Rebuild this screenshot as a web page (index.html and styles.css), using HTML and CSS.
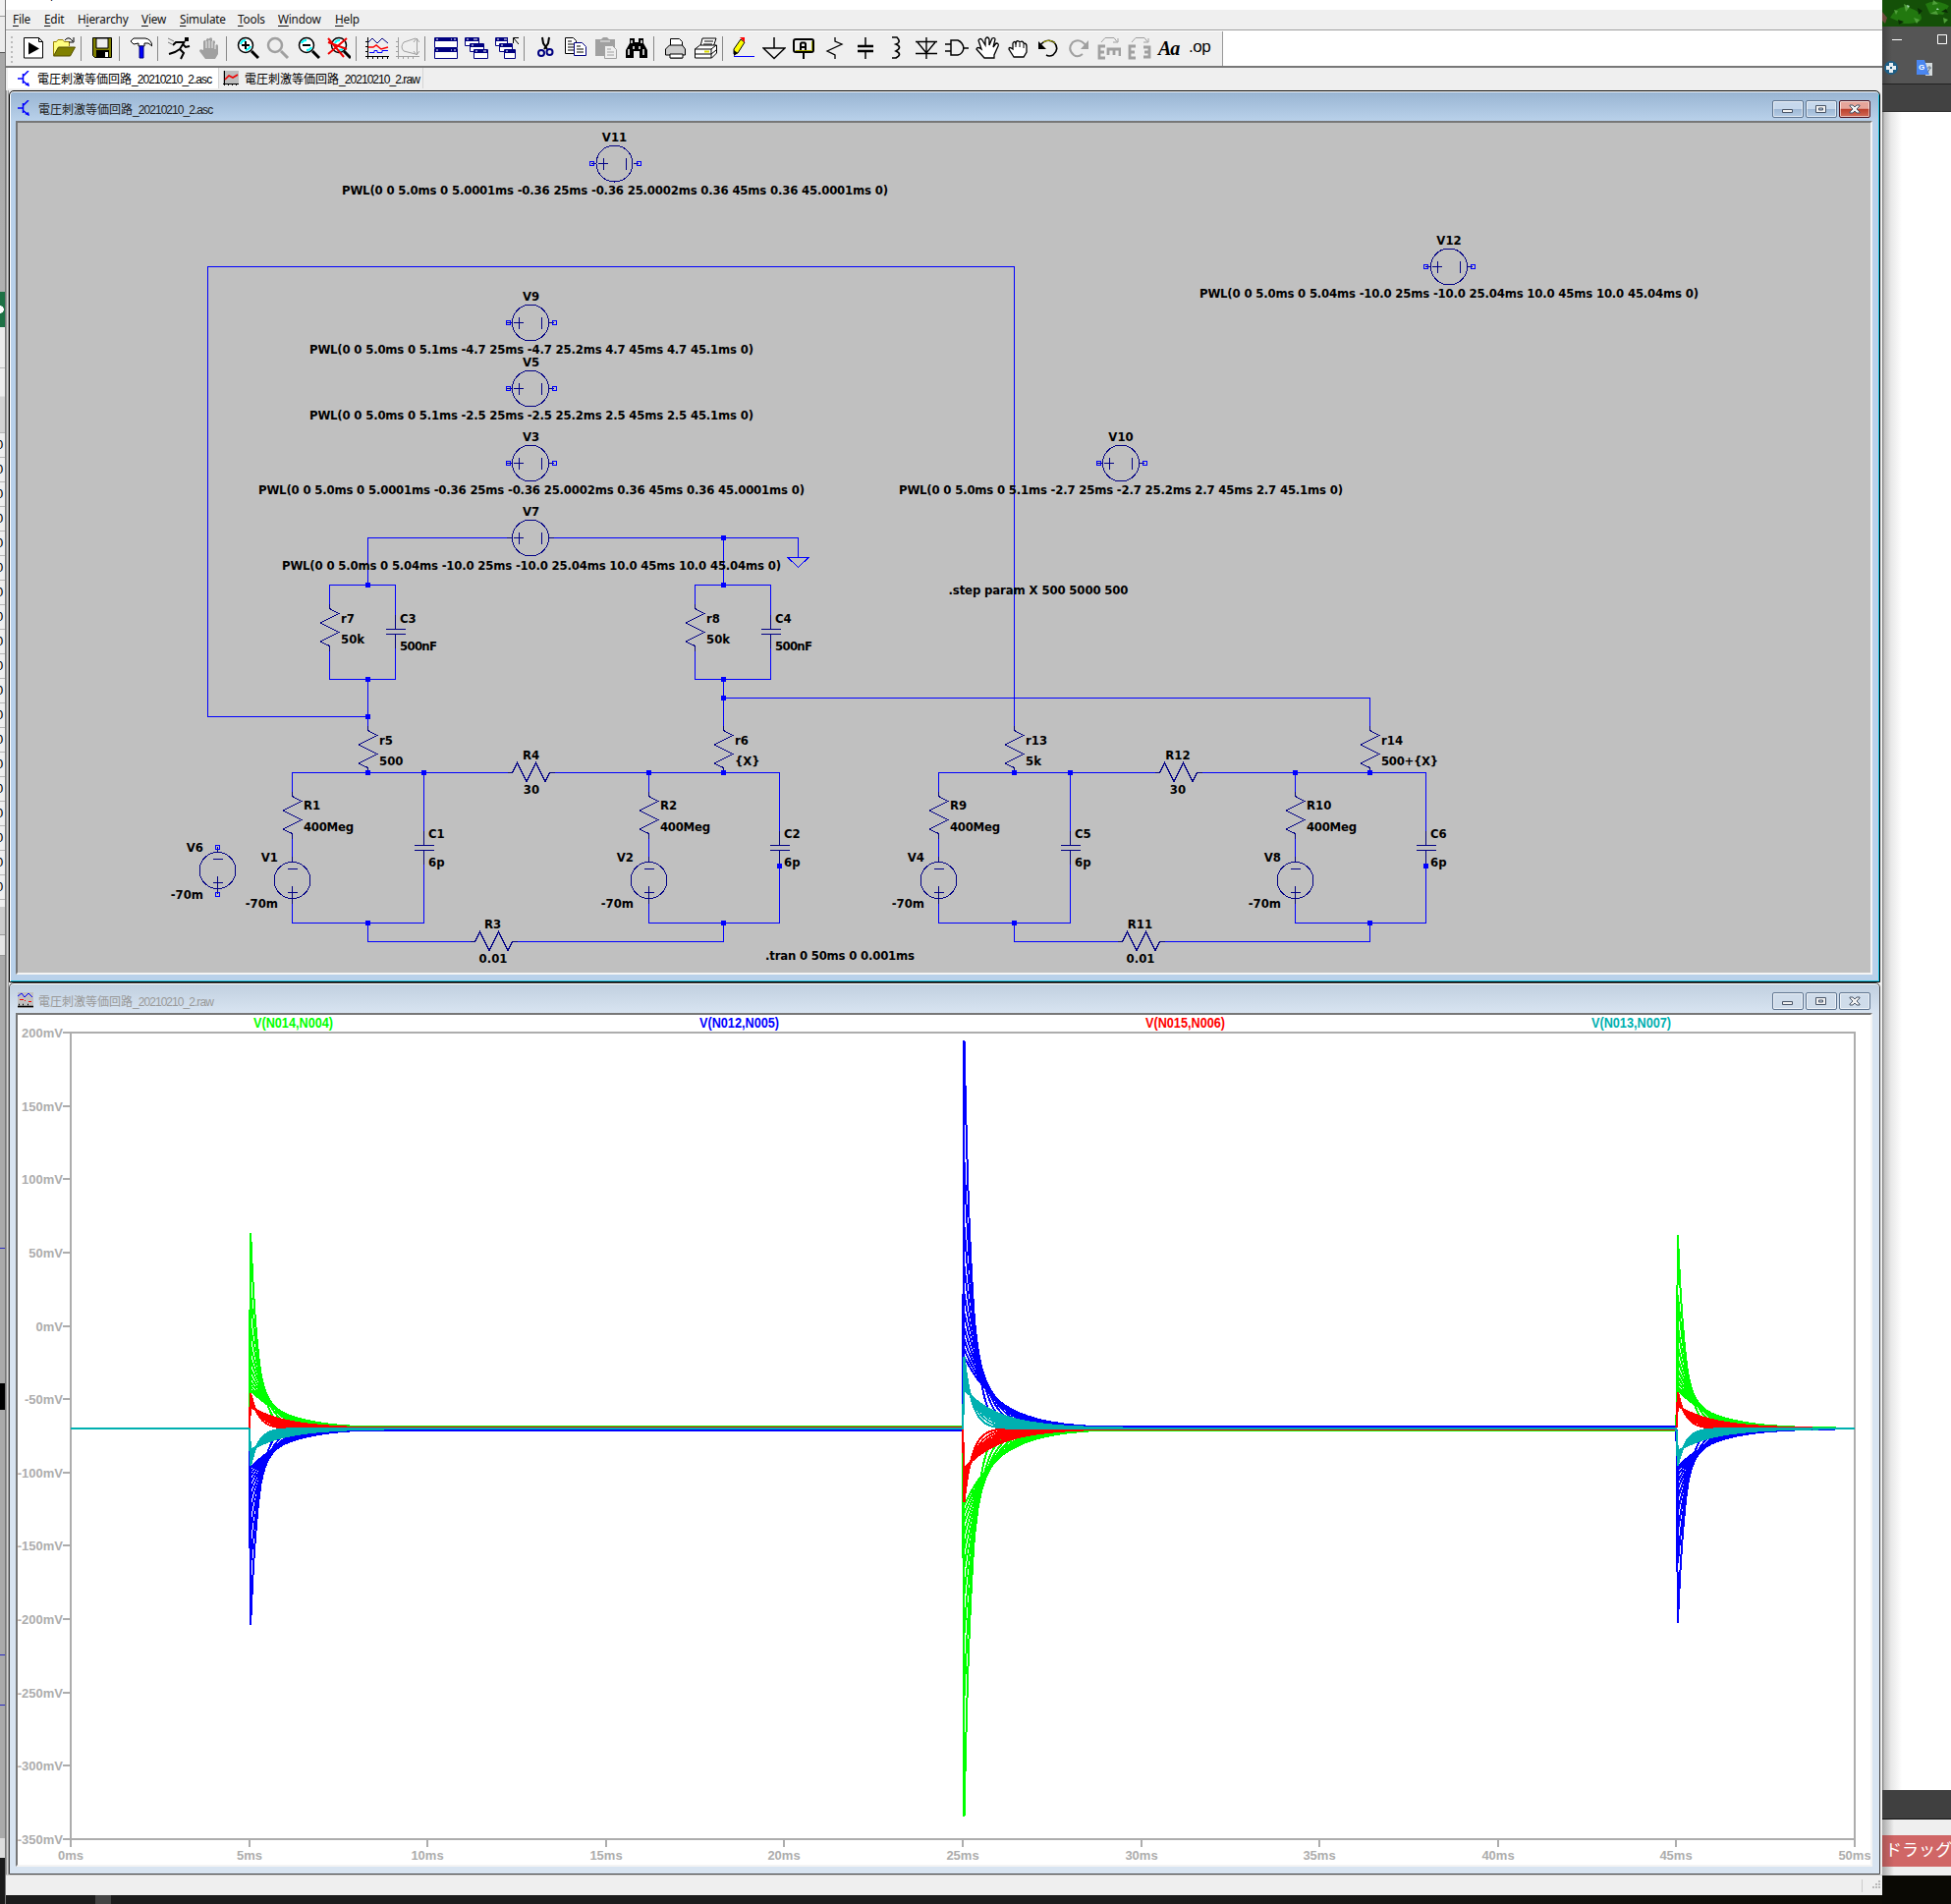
FILE: index.html
```html
<!DOCTYPE html>
<html lang="ja">
<head>
<meta charset="utf-8">
<title>LTspice XVII</title>
<link rel="stylesheet" href="styles.css">
</head>
<body>
<div class="desktop">
  <aside class="left-strip">
    <div class="ls-a"></div><div class="ls-b"></div><div class="ls-c"></div>
    <div class="ls-green"></div><div class="ls-white"></div><div class="ls-head"></div>
    <div class="ls-cells" id="cells"></div>
    <div class="ls-d"></div><div class="ls-e"></div><div class="ls-f"></div><div class="ls-black"></div><div class="ls-g"></div><div class="ls-h"></div><div class="ls-dark"></div>
  </aside>

  <main class="app">
    <div class="app-title"><span>LTspice XVII - 電圧刺激等価回路_20210210_2.asc</span></div>
    <nav class="menu">
      <span class="m1"><u>F</u>ile</span><span class="m2"><u>E</u>dit</span><span class="m3">H<u>i</u>erarchy</span><span class="m4"><u>V</u>iew</span><span class="m5"><u>S</u>imulate</span><span class="m6"><u>T</u>ools</span><span class="m7"><u>W</u>indow</span><span class="m8"><u>H</u>elp</span>
    </nav>
    <div class="toolbar-row">
      <div class="toolbar">
        <i class="grip"></i>
        <svg class="ic" viewBox="0 0 24 24"><path d="M2.500 1.500h15l4 4v16.500h-19z" fill="#fff" stroke="#000"/><path d="M17.500 1.500v4h4" fill="none" stroke="#000"/><path d="M7 6l11 6.500-11 6z"/></svg>
        <svg class="ic" viewBox="0 0 24 24"><path d="M1.500 19V5.500h3l1.500-2h5l1.500 2h5V10" fill="#ffff80" stroke="#998000"/><path d="M1.500 20l5-9h17l-5 9z" fill="#808000" stroke="#554f00"/><path d="M13 4q4-5 8 1M22 1v5h-5" fill="none" stroke="#000"/></svg>
        <i class="sep"></i>
        <svg class="ic" viewBox="0 0 24 24"><path d="M2.500 1.500h19v20h-17l-2-2z" fill="#808000" stroke="#000"/><path d="M6 2h12v10H6z" fill="#efefef" stroke="#000"/><path d="M6 14h13v8H6z"/><path d="M15 16h3v5h-3z" fill="#fff"/></svg>
        <i class="sep"></i>
        <svg class="ic" viewBox="0 0 24 24"><path d="M2 5l3-3h12q6 1 7 8l-4-3h-4v3h-6V7L5 8z" fill="#fff" stroke="#000"/><path d="M11 10h4v12h-4z" fill="#00f" stroke="#000080"/></svg>
        <i class="sep"></i>
        <svg class="ic" viewBox="0 0 24 24"><path d="M18 1h4v4h-4z"/><path d="M18 5l-5 8 4 4-3 6M13 13l-5 3-6 2M17 6L9 6 6 9M16 8l3 3 4-1" fill="none" stroke="#000" stroke-width="2"/><path d="M1 2l6 3M1 6l4 2" stroke="#777"/></svg>
        <svg class="ic" viewBox="0 0 24 24"><path d="M8 23l-6-8q0-3 4-1V5q2-2 3 0V3q2-2 3 0V2q3-2 3 1v2q3-2 3 1v3q3-2 3 1v8l-3 5z" fill="#a0a0a0"/><path d="M9 5v7M12 4v8M15 5v7M18 7v6" stroke="#efefef"/></svg>
        <i class="sep"></i>
        <svg class="ic" viewBox="0 0 24 24"><circle cx="10" cy="9" r="7.500" fill="#fff" stroke="#000" stroke-width="1.500"/><path d="M5 8q1-4 5-4M15 10q-1 3-5 4" stroke="#0ff" fill="none" stroke-width="2"/><path d="M6 9h8M10 5v8" stroke="#000" stroke-width="2"/><path d="M16 15l7 7" stroke="#000" stroke-width="3"/></svg>
        <svg class="ic" viewBox="0 0 24 24"><circle cx="9" cy="9" r="7" fill="none" stroke="#a0a0a0" stroke-width="2.500"/><path d="M15 15l7 7" stroke="#a0a0a0" stroke-width="3"/></svg>
        <svg class="ic" viewBox="0 0 24 24"><circle cx="10" cy="9" r="7.500" fill="#fff" stroke="#000" stroke-width="1.500"/><path d="M5 7q1-3 5-3M15 11q-1 3-5 3" stroke="#0ff" fill="none" stroke-width="2"/><path d="M6 9h8" stroke="#000" stroke-width="2"/><path d="M16 15l7 7" stroke="#000" stroke-width="3"/></svg>
        <svg class="ic" viewBox="0 0 24 24"><circle cx="12" cy="9" r="7.500" fill="#fff" stroke="#000" stroke-width="1.500"/><path d="M8 7q1-3 5-3M17 11q-1 3-5 3" stroke="#0ff" fill="none" stroke-width="2"/><path d="M17 15l7 7" stroke="#000" stroke-width="3"/><path d="M1 2l16 19M20 2L1 18M1 6l19 7" stroke="#e00" stroke-width="2"/></svg>
        <i class="sep"></i>
        <svg class="ic" viewBox="0 0 24 24"><path d="M2.500 1v22M0 20.500h24M0 5.500h3M0 10.500h3M0 15.500h3M7.500 20v3M12.500 20v3M17.500 20v3M22.500 20v3" stroke="#000"/><path d="M3 6l4-4 5 5 5-5 6 5" stroke="#000080" fill="none"/><path d="M3 11h5l3-2 5 4 7-2" stroke="#f00" fill="none" stroke-width="1.500"/><path d="M4 16.500h5v-2h3v2h5v-2h6" stroke="#00f" fill="none"/></svg>
        <svg class="ic" viewBox="0 0 24 24"><path d="M2.500 1v22M0 20.500h24M0 5.500h3M0 10.500h3M0 15.500h3M7.500 20v3M12.500 20v3M17.500 20v3M21.500 2v17M18 6l3-4 3 4M18 15l3 4 3-4M20 2L8 6q-4 5 0 9l12 3" stroke="#a0a0a0" fill="none"/></svg>
        <i class="sep"></i>
        <svg class="ic" viewBox="0 0 24 24"><path d="M.5 1.500h23v10H.5zM.5 12.500h23v10H.5z" fill="#fff" stroke="#000080"/><path d="M1 1h22v4H1zM1 12h22v4H1z" fill="#000080"/><path d="M17 3h1M20 3h2M2 3h2M17 14h1M20 14h2M2 14h2" stroke="#fff"/></svg>
        <svg class="ic" viewBox="0 0 24 24"><g fill="#fff" stroke="#000080"><path d="M.5 1.500h14v8H.5z"/><path d="M5.500 7.500h14v8h-14z"/><path d="M9.500 13.500h14v9h-14z"/></g><path d="M1 1h13v4H1zM6 7h13v4H6zM10 13h13v4H10z" fill="#000080"/><path d="M2 3h2M9 3h4M7 9h2M11 15h2M19 15h3" stroke="#fff"/></svg>
        <svg class="ic" viewBox="0 0 24 24"><g fill="#fff" stroke="#000080"><path d="M.5 1.500h12v8H.5z"/><path d="M4.500 7.500h13v8h-13z"/><path d="M9.500 13.500h11v9h-11z"/></g><path d="M1 1h12v4H1zM5 7h12v4H5zM10 13h10v4H10z" fill="#000080"/><path d="M2 3h2M9 3h3M6 9h2M11 15h2" stroke="#fff"/><path d="M18.500 7V1.500H24M19 2l5 6" stroke="#000" fill="none"/></svg>
        <i class="sep"></i>
        <svg class="ic" viewBox="0 0 24 24"><path d="M9 1l1 6 4 6M16 1l-1 6-4 6" stroke="#000" stroke-width="2" fill="none"/><circle cx="8" cy="17" r="3" fill="none" stroke="#000080" stroke-width="2"/><circle cx="16.500" cy="16" r="3" fill="none" stroke="#000080" stroke-width="2"/></svg>
        <svg class="ic" viewBox="0 0 24 24"><path d="M1.500 1.500h8l3 3v13h-11z" fill="#fff" stroke="#000"/><path d="M4 5h4M4 8h6M4 11h6M4 14h6" stroke="#000"/><path d="M10.500 6.500h8l4 4v9h-12z" fill="#fff" stroke="#000080"/><path d="M13 10h4M13 13h7M13 16h7" stroke="#000"/></svg>
        <svg class="ic" viewBox="0 0 24 24"><path d="M1 3h6l2-2h4l2 2h6v17H1z" fill="#a0a0a0"/><path d="M6 5h10" stroke="#efefef"/><path d="M10.500 9.500h8l4 4v9h-12z" fill="#efefef" stroke="#a0a0a0"/><path d="M13 13h4M13 16h7M13 19h7" stroke="#a0a0a0"/></svg>
        <svg class="ic" viewBox="0 0 24 24"><path d="M5 2h5v4h4V2h5v5l4 7v8h-8v-7H9v7H1v-8l4-7z"/><path d="M7 4v3M17 4v3M4 13v6M9 10v3M15 10v3M19 13v6" stroke="#fff" stroke-width="1.500"/></svg>
        <i class="sep"></i>
        <svg class="ic" viewBox="0 0 24 24"><path d="M7.500 10V2.500h9l3 3V10" fill="#fff" stroke="#000"/><path d="M2.500 13l4-4h13l3 4v6h-3v3h-12v-3h-5z" fill="#ccc" stroke="#000"/><path d="M7 18h13v4H7z" fill="#fff" stroke="#000"/></svg>
        <svg class="ic" viewBox="0 0 24 24"><path d="M7 10l2-8h14l-3 9" fill="#fff" stroke="#000"/><path d="M11 5h9M10 8h9" stroke="#000"/><path d="M1.500 13l5-4h17v8l-5 5h-17z" fill="#fff" stroke="#000"/><path d="M1 13h17v9M18 13l5-4M2 18h16l5-4" fill="none" stroke="#000"/><path d="M11 15.500h5" stroke="#dd0" stroke-width="2"/></svg>
        <i class="sep"></i>
        <svg class="ic" viewBox="0 0 24 24"><path d="M2 13L9 3l4 3-7 11-4 1z" fill="#ff0" stroke="#000"/><path d="M8 1h5v5z" fill="#f00"/><path d="M2 14l4 3-4 3z"/><path d="M2 20.500h21" stroke="#00f"/></svg>
        <svg class="ic" viewBox="0 0 24 24"><path d="M12 1v11M1 12h22L12 22.500z" fill="none" stroke="#000" stroke-width="1.500"/></svg>
        <svg class="ic" viewBox="0 0 24 24"><rect x="1" y="3" width="20" height="13" rx="2" fill="#efefef" stroke="#000" stroke-width="2"/><path d="M3 14.500h16.500V5" stroke="#aa0" fill="none"/><path d="M8 14V7.500l1-1h3l1 1V14M8 11h5M11 16v7" fill="none" stroke="#000" stroke-width="2"/></svg>
        <svg class="ic" viewBox="0 0 24 24"><path d="M12 1v4l7 3-15 7 8 4v4" fill="none" stroke="#000" stroke-width="1.300"/></svg>
        <svg class="ic" viewBox="0 0 24 24"><path d="M12 1v9M12 16v7" stroke="#000" stroke-width="1.500"/><path d="M4 10h16M4 15h16" stroke="#000" stroke-width="2.500"/></svg>
        <svg class="ic" viewBox="0 0 24 24"><path d="M8 1h5q5 5-1 7 7 3 0 7 7 3 0 7H8" fill="none" stroke="#000" stroke-width="1.700"/></svg>
        <svg class="ic" viewBox="0 0 24 24"><path d="M12 1v22M1 5.500h22M3 6l9 11 9-11M1 17.500h22" fill="none" stroke="#000" stroke-width="1.400"/></svg>
        <svg class="ic" viewBox="0 0 24 24"><path d="M6 4h7q5 2 6 8-1 6-6 7H6zM0 8h6M0 15h6M18 12h6" fill="none" stroke="#000" stroke-width="1.500"/></svg>
        <svg class="ic" viewBox="0 0 24 24"><path d="M9 22l-8-9q1-3 5 0L3 4q2-3 4 0l3 5V3q2-4 4 0v6l3-7q3-1 3 1l-2 8 3-4q3 0 2 3l-4 9v3z" fill="#fff" stroke="#000" stroke-width="1.300"/></svg>
        <svg class="ic" viewBox="0 0 24 24"><path d="M8 21l-5-8q0-3 4 0V7q2-3 3 0 1-4 4-1 3-2 4 1 3 0 3 3v6l-3 5z" fill="#fff" stroke="#000" stroke-width="1.300"/><path d="M10 7v4M14 7v4M18 8v4" stroke="#000"/></svg>
        <svg class="ic" viewBox="0 0 24 24"><path d="M3 10q7-9 15-4 6 7-1 13-4 2-7 0" fill="none" stroke="#000" stroke-width="1.600"/><path d="M7 6q7-4 12 1" fill="none" stroke="#aa0"/><path d="M2 5v8h8z"/></svg>
        <svg class="ic" viewBox="0 0 24 24"><path d="M20 10Q13 1 6 6q-6 7 1 13 4 3 9-1" fill="none" stroke="#a0a0a0" stroke-width="2"/><path d="M22 4v9h-8z" fill="#a0a0a0"/></svg>
        <svg class="ic" viewBox="0 0 24 24"><path d="M8 10H2v12h6M2 16h5M11 19v-6h12v7M17 13v6" fill="none" stroke="#a0a0a0" stroke-width="2.800"/><path d="M4 6l4-4.500h9l3 4M21 2v4h-5" fill="none" stroke="#a0a0a0"/></svg>
        <svg class="ic" viewBox="0 0 24 24"><path d="M8 10H2v12h6M2 16h5M16 11h6v10h-6M17 16h5" fill="none" stroke="#a0a0a0" stroke-width="2.800"/><path d="M4 6l4-4.500h9l3 4M21 2v4h-5" fill="none" stroke="#a0a0a0"/></svg>
        <span class="ic txt-aa">Aa</span>
        <span class="ic txt-op">.op</span>
      </div>
    </div>
    <div class="tabs">
      <div class="tab active"><svg class="tico" viewBox="0 0 16 16"><use href="#bjt"/></svg><span>電圧刺激等価回路<b>_20210210_2.asc</b></span></div>
      <div class="tab"><svg class="tico" viewBox="0 0 16 16"><path d="M0 0h16v13H0z" fill="#bdbdbd"/><path d="M1.500 0v15M0 13.500h16M5.500 13v2M9.500 13v2M13.500 13v2" stroke="#000"/><path d="M2 9l4-4 4 2 5-3" stroke="#e00" stroke-width="1.600" fill="none"/></svg><span>電圧刺激等価回路<b>_20210210_2.raw</b></span></div>
    </div>

    <section class="win focus">
      <header class="caption"><svg class="cico" viewBox="0 0 16 16"><use href="#bjt"/></svg><span>電圧刺激等価回路<b>_20210210_2.asc</b></span>
        <div class="btns"><i class="wb"><svg viewBox="0 0 30 16"><path d="M9.500 8.500h10v3h-10z" class="g"/></svg></i><i class="wb"><svg viewBox="0 0 30 16"><path d="M9.500 4.500h10v7h-10zM12.500 7h4v2h-4z" class="g"/></svg></i><i class="wb x"><svg viewBox="0 0 30 16"><path d="M10 4h3l2 2 2-2h3v1l-3 3 3 3v1h-3l-2-2-2 2h-3v-1l3-3-3-3z" class="g"/></svg></i></div>
      </header>
      <div class="client">
      <svg class="schem" viewBox="18 125 1886 865">
        <defs>
          <g id="bjt" fill="none" stroke="#00f" stroke-width="1.500"><path d="M0 8h5M5.500 3v10M5 6l6-6M5 10l6 5" shape-rendering="auto"/><path d="M7 14l5 2-1-4" fill="#00f" stroke="none"/></g>
          <path id="res" class="dk" d="M0-5V0l9.500 5-19 9.500 19 9.500-19 9.500 9.500 4.500v5"/>
          <path id="resh" class="dk" d="M-24 0h5l5-10 9.500 19 9.500-19 9.500 19 4.500-9h5"/>
          <path id="cap" class="dk" d="M0-17V-2M-10-2.500H10M-10 2.500H10M0 2V17"/>
          <g id="src" class="dk"><circle r="18.500"/><path d="M-5-12H5M-5 12H5M0 6V18M0-24v5M0 19v5"/></g>
          <g id="srch" class="dk"><circle r="18.500"/><path d="M-17 0h10M-11.500-6v12M11.500-6v12M-24 0h5M19 0h5"/></g>
          <path id="pin" class="w" d="M-2-2h4v4h-4z"/>
          <path id="dot" d="M-2.500-2.500h5v5h-5z" fill="#00f"/>
        </defs>
        <g class="w">
          <path d="M374.500 729.500H211.500V271.500H1032.500V744"/>
          <path d="M374.500 595.500V547.500H521M560 547.500H812.500V567M736.500 547.500V595.500M802 567.500H823L812.500 577.500Z"/>
          <path d="M335.500 619V595.500H402.500V640M335.500 657V691.500H402.500V645M374.500 691.500V744"/>
          <path d="M707.500 619V595.500H784.500V640M707.500 657V691.500H784.500V645M736.500 691.500V744M736.500 710.500H1394.500V744"/>
          <path d="M297.500 810V786.500H521M560 786.500H793.500V860M431.500 786.500V860M660.500 786.500V810M297.500 848V877M660.500 848V877M297.500 915V939.500H431.500V865M660.500 915V939.500H793.500V865M374.500 939.500V958.500H483M521 958.500H736.500V939.500"/>
          <path d="M955.500 810V786.500H1180M1219 786.500H1451.500V860M1089.500 786.500V860M1318.500 786.500V810M955.500 848V877M1318.500 848V877M955.500 915V939.500H1089.500V865M1318.500 915V939.500H1451.500V865M1032.500 939.500V958.500H1142M1180 958.500H1394.500V939.500"/>
        </g>
        <use href="#res" x="335.500" y="619.500"/><use href="#res" x="707.500" y="619.500"/>
        <use href="#res" x="374.500" y="743.500"/><use href="#res" x="736.500" y="743.500"/><use href="#res" x="1032.500" y="743.500"/><use href="#res" x="1394.500" y="743.500"/>
        <use href="#res" x="297.500" y="810.500"/><use href="#res" x="660.500" y="810.500"/><use href="#res" x="955.500" y="810.500"/><use href="#res" x="1318.500" y="810.500"/>
        <use href="#resh" x="540.500" y="786.500"/><use href="#resh" x="1199.500" y="786.500"/><use href="#resh" x="502.500" y="958.500"/><use href="#resh" x="1161.500" y="958.500"/>
        <use href="#cap" x="402.500" y="643"/><use href="#cap" x="784.500" y="643"/>
        <use href="#cap" x="431.500" y="863"/><use href="#cap" x="793.500" y="863"/><use href="#cap" x="1089.500" y="863"/><use href="#cap" x="1451.500" y="863"/>
        <use href="#src" x="297.500" y="896"/><use href="#src" x="660.500" y="896"/><use href="#src" x="955.500" y="896"/><use href="#src" x="1318.500" y="896"/><use href="#src" x="221.500" y="886"/>
        <use href="#srch" x="540" y="547.500"/><use href="#srch" x="625.500" y="166.500"/><use href="#srch" x="540" y="328.500"/><use href="#srch" x="540" y="395.500"/><use href="#srch" x="540" y="471.500"/><use href="#srch" x="1141" y="471.500"/><use href="#srch" x="1475" y="271.500"/>
        <use href="#pin" x="221.500" y="862.500"/><use href="#pin" x="221.500" y="910.500"/>
        <use href="#pin" x="602.500" y="166.500"/><use href="#pin" x="650.500" y="166.500"/><use href="#pin" x="517.500" y="328.500"/><use href="#pin" x="564.500" y="328.500"/><use href="#pin" x="517.500" y="395.500"/><use href="#pin" x="564.500" y="395.500"/><use href="#pin" x="517.500" y="471.500"/><use href="#pin" x="564.500" y="471.500"/><use href="#pin" x="1118.500" y="471.500"/><use href="#pin" x="1165.500" y="471.500"/><use href="#pin" x="1451.500" y="271.500"/><use href="#pin" x="1499.500" y="271.500"/>
        <use href="#dot" x="374.500" y="595.500"/><use href="#dot" x="374.500" y="691.500"/><use href="#dot" x="374.500" y="729.500"/><use href="#dot" x="374.500" y="786.500"/><use href="#dot" x="431.500" y="786.500"/><use href="#dot" x="374.500" y="939.500"/>
        <use href="#dot" x="736.500" y="547.500"/><use href="#dot" x="736.500" y="595.500"/><use href="#dot" x="736.500" y="691.500"/><use href="#dot" x="736.500" y="710.500"/><use href="#dot" x="736.500" y="786.500"/><use href="#dot" x="660.500" y="786.500"/><use href="#dot" x="736.500" y="939.500"/><use href="#dot" x="793.500" y="881.500"/>
        <use href="#dot" x="1032.500" y="786.500"/><use href="#dot" x="1089.500" y="786.500"/><use href="#dot" x="1318.500" y="786.500"/><use href="#dot" x="1394.500" y="786.500"/><use href="#dot" x="1032.500" y="939.500"/><use href="#dot" x="1394.500" y="939.500"/><use href="#dot" x="1451.500" y="881.500"/>
        <g class="mid">
          <text x="625.500" y="144">V11</text><text x="626" y="198" textLength="556">PWL(0 0 5.0ms 0 5.0001ms -0.36 25ms -0.36 25.0002ms 0.36 45ms 0.36 45.0001ms 0)</text>
          <text x="1475" y="249">V12</text><text x="1475" y="303" textLength="508">PWL(0 0 5.0ms 0 5.04ms -10.0 25ms -10.0 25.04ms 10.0 45ms 10.0 45.04ms 0)</text>
          <text x="540.500" y="306">V9</text><text x="541" y="360" textLength="452">PWL(0 0 5.0ms 0 5.1ms -4.7 25ms -4.7 25.2ms 4.7 45ms 4.7 45.1ms 0)</text>
          <text x="540.500" y="373">V5</text><text x="541" y="427" textLength="452">PWL(0 0 5.0ms 0 5.1ms -2.5 25ms -2.5 25.2ms 2.5 45ms 2.5 45.1ms 0)</text>
          <text x="540.500" y="449">V3</text><text x="541" y="503" textLength="556">PWL(0 0 5.0ms 0 5.0001ms -0.36 25ms -0.36 25.0002ms 0.36 45ms 0.36 45.0001ms 0)</text>
          <text x="1141" y="449">V10</text><text x="1141" y="503" textLength="452">PWL(0 0 5.0ms 0 5.1ms -2.7 25ms -2.7 25.2ms 2.7 45ms 2.7 45.1ms 0)</text>
          <text x="540.500" y="525">V7</text><text x="541" y="580" textLength="508">PWL(0 0 5.0ms 0 5.04ms -10.0 25ms -10.0 25.04ms 10.0 45ms 10.0 45.04ms 0)</text>
          <text x="1057" y="605" textLength="183">.step param X 500 5000 500</text>
          <text x="855" y="977" textLength="152">.tran 0 50ms 0 0.001ms</text>
          <text x="540.500" y="773">R4</text><text x="541" y="808">30</text><text x="1199" y="773">R12</text><text x="1199" y="808">30</text>
          <text x="501.500" y="945">R3</text><text x="502" y="980">0.01</text><text x="1160.500" y="945">R11</text><text x="1161" y="980">0.01</text>
        </g>
        <g>
          <text x="347" y="634">r7</text><text x="347" y="655">50k</text><text x="407" y="634">C3</text><text x="407" y="662" textLength="38">500nF</text>
          <text x="719" y="634">r8</text><text x="719" y="655">50k</text><text x="789" y="634">C4</text><text x="789" y="662" textLength="38">500nF</text>
          <text x="386" y="758">r5</text><text x="386" y="779">500</text><text x="748" y="758">r6</text><text x="748" y="779">{X}</text>
          <text x="1044" y="758">r13</text><text x="1044" y="779">5k</text><text x="1406" y="758">r14</text><text x="1406" y="779" textLength="58">500+{X}</text>
          <text x="309" y="824">R1</text><text x="309" y="846" textLength="51">400Meg</text><text x="672" y="824">R2</text><text x="672" y="846" textLength="51">400Meg</text>
          <text x="967" y="824">R9</text><text x="967" y="846" textLength="51">400Meg</text><text x="1330" y="824">R10</text><text x="1330" y="846" textLength="51">400Meg</text>
          <text x="436" y="853">C1</text><text x="436" y="882">6p</text><text x="798" y="853">C2</text><text x="798" y="882">6p</text>
          <text x="1094" y="853">C5</text><text x="1094" y="882">6p</text><text x="1456" y="853">C6</text><text x="1456" y="882">6p</text>
        </g>
        <g class="end">
          <text x="207" y="867">V6</text><text x="207" y="915">-70m</text><text x="283" y="877">V1</text><text x="283" y="924">-70m</text>
          <text x="645" y="877">V2</text><text x="645" y="924">-70m</text><text x="941" y="877">V4</text><text x="941" y="924">-70m</text><text x="1304" y="877">V8</text><text x="1304" y="924">-70m</text>
        </g>
      </svg>
      </div>
    </section>

    <section class="win">
      <header class="caption"><svg class="cico" viewBox="0 0 16 16"><path d="M0 0h16v16H0z" fill="#c0c0c0"/><path d="M0 4l4-3 3 4 4-4 4 4" stroke="#00f" fill="none"/><path d="M2 7.500h4M7 8.500h1M11 9.500h3" stroke="#f00"/><path d="M0 14.500h16M1 12.500h1M5 12.500h1M10 12.500h1" stroke="#000" stroke-width="1.500"/></svg><span>電圧刺激等価回路<b>_20210210_2.raw</b></span>
        <div class="btns"><i class="wb"><svg viewBox="0 0 30 16"><path d="M9.500 8.500h10v3h-10z" class="g"/></svg></i><i class="wb"><svg viewBox="0 0 30 16"><path d="M9.500 4.500h10v7h-10zM12.500 7h4v2h-4z" class="g"/></svg></i><i class="wb"><svg viewBox="0 0 30 16"><path d="M10 4h3l2 2 2-2h3v1l-3 3 3 3v1h-3l-2-2-2 2h-3v-1l3-3-3-3z" class="g"/></svg></i></div>
      </header>
      <div class="client plotbg">
        <svg class="plot" id="plot" viewBox="18 1033 1886 865">
          <g class="legend">
            <text x="298.500" y="1046" fill="#0f0" textLength="81" lengthAdjust="spacingAndGlyphs">V(N014,N004)</text>
            <text x="752.500" y="1046" fill="#00f" textLength="81" lengthAdjust="spacingAndGlyphs">V(N012,N005)</text>
            <text x="1206.500" y="1046" fill="#f00" textLength="81" lengthAdjust="spacingAndGlyphs">V(N015,N006)</text>
            <text x="1660.500" y="1046" fill="#00b0b0" textLength="81" lengthAdjust="spacingAndGlyphs">V(N013,N007)</text>
          </g>
          <g id="axes"></g>
          <g id="traces"></g>
        </svg>
      </div>
    </section>
    <footer class="status"><i class="ssep"></i><svg class="sgrip" viewBox="0 0 10 10"><path d="M7 0h2v2H7zM4 3h2v2H4zM7 3h2v2H7zM1 6h2v2H1zM4 6h2v2H4zM7 6h2v2H7z" fill="#b8b8b8"/></svg></footer>
    <div class="taskbar"><i></i></div>
  </main>

  <aside class="right-strip">
    <svg class="photo" viewBox="0 0 70 27"><path d="M0 0h70v27H0z" fill="#145008"/><path d="M8 18q8-14 20-10t12 10-18 6zM44 4q10-6 24 2l-6 9-14-2z" fill="#22780f"/><path d="M22 4l6 3-4 5zM48 14l7-3 2 4zM32 18l6 2-3 4zM52 0l5 4-6 1zM12 10l4 1-2 4zM62 18l5 2-4 4z" fill="#4f9f3a"/><path d="M25 5l3 1-2 2zM56 8l2 2h-3z" fill="#a8dcb8"/><path d="M36 8l5 3-4 4zM16 20l6 2-5 3zM60 12l5-3 2 4z" fill="#0a2c05"/><path d="M0 12l5 6-2 6-3-3z" fill="#6b4a3c"/></svg>
    <div class="rs-bar"><svg viewBox="0 0 70 58"><path d="M10 13.500h10" stroke="#fff"/><path d="M56.500 8.500h9v9h-9z" fill="none" stroke="#fff"/><circle cx="9" cy="42" r="7" fill="#1f5f86"/><path d="M7 37h4v3h3v4h-3v3H7v-3H4v-4h3z" fill="#e8eef2"/><path d="M8 41h2v2H8z" fill="#1f5f86"/><path d="M44 37h7v13h-7z" fill="#d5dbdc"/><path d="M35 34h8l5 15H35z" fill="#4a86f0"/><text x="37" y="44" class="gt">G</text><path d="M46 42h4M48 40v2M46 47l3-5" stroke="#678" fill="none"/></svg></div>
    <div class="rs-bar2"></div>
    <div class="rs-page"></div>
    <div class="rs-bar3"></div>
    <div class="rs-light"></div>
    <div class="rs-red">ドラッグ</div>
    <div class="rs-light2"></div>
    <div class="rs-black"></div>
  </aside>
</div>
<script src="plot.js"></script>
</body>
</html>
```
FILE: styles.css
```css
* { box-sizing: border-box; }
body { margin: 0; background: #1c1c1c; font-family: "Noto Sans", "Noto Sans CJK JP", sans-serif; font-size: 12px; }
.desktop { width: 1986px; height: 1938px; display: grid; grid-template-columns: 6px 1910px 70px; overflow: hidden; }
svg { display: block; }

/* neighbouring windows, left edge */
.left-strip { display: flex; flex-direction: column; overflow: hidden; border-right: 1px solid #777; background: #aaa; }
.ls-a { height: 17px; background: #f2f2f2; border-bottom: 1px solid #999; }
.ls-b { height: 37px; background: #ececec; border-bottom: 1px solid #555; }
.ls-c { height: 243px; background: linear-gradient(#a8a8a8, #b0b0b0); }
.ls-green { height: 36px; background: radial-gradient(ellipse 4px 4px at 0 18px, #fff 90%, #1e7145 100%); }
.ls-white { height: 42px; background: #ececec; border-bottom: 1px solid #bbb; }
.ls-head { height: 65px; background: linear-gradient(#eee 28px, #d4d4d4 29px); }
.ls-cells { height: 483px; overflow: hidden; background: #f0f0f0; }
.cell { height: 25px; border-top: 1px solid #b5b5b5; font: 13px/23px "Liberation Sans", sans-serif; text-indent: -4px; white-space: nowrap; }
.ls-d { height: 28px; background: #ccc; }
.ls-e { height: 22px; background: #e5e5e5; border: 1px solid #999; border-width: 1px 0; }
.ls-f { height: 435px; background: linear-gradient(#aaa 297px, #2a2ac0 297px, #2a2ac0 298px, #aaa 298px); }
.ls-black { height: 27px; background: #000; }
.ls-g { height: 436px; background: linear-gradient(#aaa 249px, #2a2ac0 249px, #2a2ac0 250px, #aaa 250px, #aaa 300px, #2a2ac0 300px, #2a2ac0 301px, #aaa 301px); }
.ls-h { height: 20px; background: #ddd; }
.ls-dark { flex: 1; background: #1a1a1a; }

/* application frame */
.app { display: flex; flex-direction: column; min-width: 0; background: linear-gradient(90deg, #999 1px, #d8d8d8 1px, #d8d8d8 2px, #666 3px, #efefef 3px); }
.app-title { height: 10px; background: #fff; overflow: hidden; padding-left: 28px; }
.app-title span { display: block; margin-top: -15px; line-height: 17px; font-size: 11.500px; white-space: nowrap; }
.menu { height: 22px; display: flex; background: #efefef; border-bottom: 1px solid #fff; box-shadow: inset 0 -1px #a0a0a0; padding-left: 7px; line-height: 19px; font-size: 11.800px; letter-spacing: -.2px; color: #111; }
.menu span { display: block; white-space: nowrap; }
.menu u { text-underline-offset: 2px; }
.m1 { width: 32px; } .m2 { width: 34px; } .m3 { width: 65px; } .m4 { width: 39px; } .m5 { width: 59px; } .m6 { width: 41px; } .m7 { width: 58px; }
.toolbar-row { height: 37px; background: #fff; border-bottom: 2px solid #777; }
.toolbar { width: 1239px; height: 35px; background: #efefef; border-right: 1px solid #999; display: flex; align-items: flex-start; gap: 7px; padding: 5px 0 0 5px; }
.ic { width: 24px; height: 24px; flex: none; }
.grip { width: 4px; height: 28px; flex: none; background: repeating-linear-gradient(#bbb 0 2px, transparent 2px 5px) no-repeat 0 0 / 2px 28px; }
.sep { width: 1px; height: 25px; flex: none; background: #888; margin: 0 2px 0 -2px; }
.txt-aa { font: italic bold 20px/24px "Liberation Serif", serif; letter-spacing: -1px; }
.txt-op { font: 17px/22px "Liberation Sans", sans-serif; letter-spacing: -.5px; }
.tabs { height: 23px; display: flex; background: #efefef; padding-left: 2px; }
.tab { height: 21px; display: flex; align-items: center; padding-left: 4px; border-right: 1px solid #d5d5d5; color: #000; width: 208px; white-space: nowrap; font-family: "Noto Sans CJK JP", sans-serif; }
.tab.active { width: 215px; padding-left: 10px; background: #fff; }
.tab .tico { width: 16px; height: 16px; margin-right: 6px; }
.tab.active .tico { margin-right: 4px; }
.tab b, .caption b { font: 12px "Liberation Sans", sans-serif; letter-spacing: -.95px; }

/* MDI child windows */
.win { height: 908px; margin: 0 2px 0 3px; display: flex; flex-direction: column; border: 1px solid #444; border-radius: 5px 5px 0 0; padding: 0 7px 7px 6px; background: linear-gradient(#c0cfdf, #d8e4f1 30px); box-shadow: inset 0 1px #fff; color: #999; flex: none; }
.win.focus { border-color: #000; background: linear-gradient(#98b4d2, #b9d1ea 30px); box-shadow: inset 0 1px #fff, inset 1px 0 #fff, inset -1px -1px #17c3df; color: #222; }
.caption { height: 30px; display: flex; align-items: center; padding: 4px 2px 0 2px; white-space: nowrap; font-family: "Noto Sans CJK JP", sans-serif; flex: none; }
.cico { width: 16px; height: 16px; margin-right: 5px; }
.btns { margin-left: auto; display: flex; gap: 2px; margin-top: 1px; }
.wb { width: 32px; height: 18px; border: 1px solid #5f7590; border-radius: 2px; box-shadow: inset 0 0 0 1px rgba(255,255,255,.6); background: linear-gradient(#c6d8ec 48%, #9db7d4 50%, #b5cce5); }
.win:not(.focus) .wb { background: #cfdcea; }
.win .wb.x { border-color: #4c1420; background: linear-gradient(#e6a59a 46%, #bb3f2b 50%, #d26b57); }
.g { fill: #f2f2f2; fill-rule: evenodd; stroke: #4a5668; }
.client { flex: 1; border: 2px solid; border-color: #777 #f4f4f4 #f4f4f4 #777; background: #c0c0c0; overflow: hidden; }
.plotbg { background: #fff; }
.schem, .plot { width: 1886px; height: 865px; }
.schem { shape-rendering: crispEdges; font: bold 13px "DejaVu Sans Condensed", "DejaVu Sans", sans-serif; font-stretch: condensed; fill: #000; }
.w { fill: none; stroke: #00f; }
.dk { fill: none; stroke: #000084; }
.mid { text-anchor: middle; }
.end { text-anchor: end; }
.plot { font: bold 13px "Liberation Sans", sans-serif; shape-rendering: crispEdges; }
.legend { text-anchor: middle; font-size: 14px; }
.axis { stroke: #adadad; stroke-width: 2; fill: none; }
.lab { fill: #adadad; }
.trace { fill: none; stroke-width: 2; stroke-linejoin: bevel; }
.status { height: 21px; background: #efefef; border-top: 1px solid #ccc; display: flex; justify-content: flex-end; align-items: center; gap: 9px; padding-right: 1px; margin-top: 0; flex: none; }
.ssep { width: 1px; height: 13px; background: #ccc; }
.sgrip { width: 10px; height: 10px; }
.taskbar { height: 9px; background: linear-gradient(90deg, #1c1c1c 60%, #0c0a04); display: flex; flex: none; }
.taskbar i { margin-left: 91px; width: 16px; background: #444; }

/* neighbouring windows, right edge */
.right-strip { display: flex; flex-direction: column; overflow: hidden; }
.photo { height: 27px; flex: none; }
.rs-bar { height: 58px; background: linear-gradient(90deg, #444, #555 10px); }
.gt { font: bold 8px "Liberation Sans", sans-serif; fill: #fff; }
.rs-bar2 { height: 29px; background: #424242; border-top: 1px solid #222; border-bottom: 1px solid #333; }
.rs-page { height: 1708px; background: linear-gradient(90deg, #777 0, #c2c2c2 2px, #e8e8e8 9px, #fff 20px); }
.rs-bar3 { height: 30px; background: #404040; border-bottom: 1px solid #111; }
.rs-light { height: 16px; background: linear-gradient(90deg, #aaa, #efefef 12px); }
.rs-red { height: 32px; background: linear-gradient(90deg, #a55, #d06666 12px); color: #fff; font: 17px/28px "Noto Sans CJK JP", sans-serif; white-space: nowrap; padding-left: 3px; }
.rs-light2 { height: 9px; background: linear-gradient(90deg, #aaa, #efefef 12px); }
.rs-black { flex: 1; background: #0a0904; }
```
FILE: plot.js
```js
const NS = 'http://www.w3.org/2000/svg';
function add(parent, tag, attrs, text) {
  const e = document.createElementNS(NS, tag);
  for (const k in attrs) e.setAttribute(k, attrs[k]);
  if (text) e.textContent = text;
  parent.appendChild(e);
}
const axes = document.getElementById('axes');
const traces = document.getElementById('traces');
const X0 = 72, X1 = 1888, Y0 = 1051, Y1 = 1872;
add(axes, 'rect', { x: X0, y: Y0, width: X1 - X0, height: Y1 - Y0, class: 'axis' });
for (let i = 0; i <= 11; i++) {
  const y = Math.round(Y0 + i * (Y1 - Y0) / 11);
  add(axes, 'path', { d: `M64 ${y}H${X0}`, class: 'axis' });
  add(axes, 'text', { x: 64, y: y + 5, class: 'lab end' }, (200 - 50 * i) + 'mV');
}
for (let i = 0; i <= 10; i++) {
  const x = Math.round(X0 + i * (X1 - X0) / 10);
  add(axes, 'path', { d: `M${x} ${Y1}v8`, class: 'axis' });
  add(axes, 'text', { x: x, y: 1893, class: 'lab mid' }, 5 * i + 'ms');
}

// Each signal: peak for the smallest and largest X on the three edges, plus the resting offset.
const BASE = 1454;
const EDGES = [253.6, 980, 1706.4];
const signals = [
  { color: '#00ff00', peaks: [[-199, -39], [395, 78], [-197, -39]], rest: [-2, 2, 0] },
  { color: '#0000ff', peaks: [[200, 40], [-395, -73], [198, 39]], rest: [2, -2, 0] },
  { color: '#ff0000', peaks: [[-36, -22], [75, 41], [-37, -23]], rest: [-1, 1, 0] },
  { color: '#00b0b0', peaks: [[38, 22], [-73, -40], [38, 23]], rest: [0, 0, 0] }
];
for (const s of signals) {
  for (let k = 0; k < 10; k++) {
    const R = 500 + 500 * k;
    const g = 1125 / (R + 625);
    const tau = 8.2 * Math.pow(1 / g, 0.93);
    let d = `M${X0} ${BASE}`;
    let prev = 0;
    EDGES.forEach((x, n) => {
      const [a, b] = s.peaks[n];
      const amp = b + (a - b) * (g - 0.2) / 0.8;
      const stop = n < 2 ? EDGES[n + 1] : X1;
      const rest = s.rest[n];
      d += `L${x} ${BASE + prev}`;
      for (let t = 1.500; x + t < stop; t += t < 60 ? 1 : 6) {
        const v = amp * Math.exp(-(t - 1.500) / tau);
        const m = Math.abs(v) < Math.abs(rest) ? rest : v;
        d += `L${(x + t).toFixed(1)} ${(BASE + m).toFixed(1)}`;
      }
      d += `L${stop} ${BASE + rest}`;
      prev = rest;
    });
    add(traces, 'path', { d: d, class: 'trace', stroke: s.color });
  }
}

const cells = document.getElementById('cells');
for (let i = 0; i < 20; i++) {
  const c = document.createElement('div');
  c.className = 'cell';
  c.textContent = '0';
  cells.appendChild(c);
}
```
